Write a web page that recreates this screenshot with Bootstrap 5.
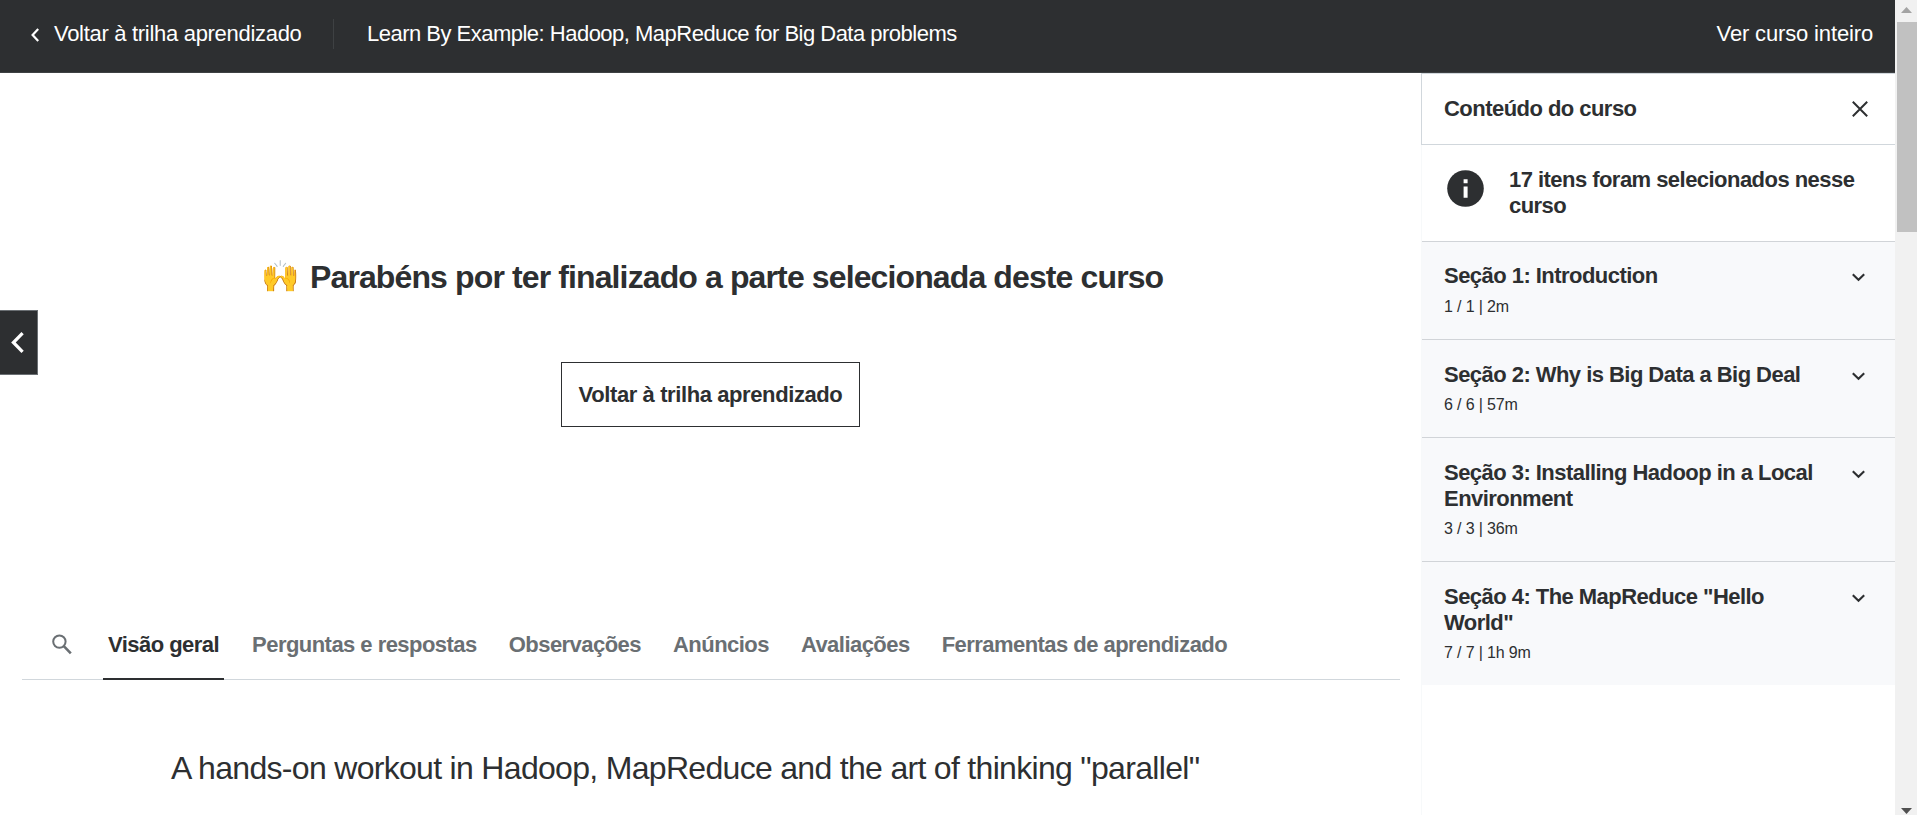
<!DOCTYPE html>
<html lang="pt-BR">
<head>
<meta charset="utf-8">
<meta name="viewport" content="width=device-width, initial-scale=1">
<title>Learn By Example: Hadoop, MapReduce for Big Data problems</title>
<link href="https://cdn.jsdelivr.net/npm/bootstrap@5.3.0/dist/css/bootstrap.min.css" rel="stylesheet">
<style>
  :root { --ink: #2d2f31; --muted: #6a6f73; --rule: #d1d7dc; }
  body { font-family: "Liberation Sans", Arial, sans-serif; font-size: 22px; line-height: 26px; color: var(--ink); }
  svg { display: block; flex: none; }
  a { color: inherit; text-decoration: none; }
  .app { height: 815px; }
  .topbar { height: 73px; background: var(--ink); border-bottom: 1px solid #3e4143; padding: 19px 22px 0 31px; }
  .topbar a, .topbar span { line-height: 30px; white-space: nowrap; }
  .topbar .sep { width: 1px; height: 30px; background: #3e4143; margin: 0 33px 0 31px; }
  .back-link { width: 271px; letter-spacing: -.3px; gap: 15px; }
  .back-link svg { margin-top: 1px; }
  .course-name { letter-spacing: -.51px; }
  .full-link { letter-spacing: -.15px; }
  .main-pane { padding: 0 21px 0 22px; }
  .stage { height: 538px; }
  .congrats { font-size: 32px; line-height: 40px; letter-spacing: -.88px; margin: 184px 0 0 240px; }
  .congrats .hands { font-size: 31px; width: 48px; letter-spacing: 0; text-indent: -1px; }
  .return-btn { width: 299px; height: 65px; margin: 65px 0 0 539px; border: 1px solid var(--ink); border-radius: 0; font-size: 22px; letter-spacing: -.4px; padding: 0; color: var(--ink); white-space: nowrap; }
  .prev-btn { left: 0; top: 310px; width: 38px; height: 65px; background: var(--ink); border: 1px solid var(--muted); border-left: 0; padding-left: 11px; }
  .tabs { height: 69px; border-bottom: 1px solid var(--rule); padding-left: 30px; letter-spacing: -.54px; color: var(--muted); }
  .tabs svg { margin: 23px 31px 0 0; }
  .tabs a { padding: 21px 5px 0; margin-right: 22px; height: 69px; border-bottom: 2px solid transparent; white-space: nowrap; }
  .tabs a.active { color: var(--ink); border-color: var(--ink); margin-right: 23px; }
  .headline { font-size: 32px; line-height: 40px; letter-spacing: -.69px; margin: 68px 0 0 149px; white-space: nowrap; font-weight: 400; }
  .sidebar { width: 474px; border-left: 1px solid #f7f9fa; letter-spacing: -.54px; }
  .side-head { height: 72px; border: 1px solid var(--rule); border-right: 0; margin-left: -1px; padding: 0 27px 0 22px; }
  .notice { height: 96px; padding: 22px 28px 0 25px; }
  .notice svg { margin-top: 3px; }
  .notice p { margin-left: 25px; }
  .section-item { background: #f8f9fb; border-top: 1px solid #d1d4d8; padding: 22px 30px 0 22px; height: 98px; }
  .section-item.first { padding-top: 21px; }
  .section-item.first h2 { margin-bottom: 7px; }
  .section-item.tall { height: 124px; }
  .section-item svg { margin-top: 10px; }
  .section-item h2 { font-size: 22px; line-height: 26px; margin: 0 0 6px; font-weight: 700; width: 385px; }
  .meta { font-size: 16px; line-height: 22px; letter-spacing: -.15px; }
  .scrollbar { width: 22px; background: #f1f1f1; padding: 7px 0 0 2px; }
  .scroll-up { margin-bottom: 9px; }
  .scroll-thumb { height: 210px; background: #c1c1c1; }
</style>
</head>
<body class="overflow-hidden">
<div class="app d-flex position-relative">
  <div class="flex-grow-1 d-flex flex-column">
    <header class="topbar d-flex align-items-start text-white">
      <a href="#" class="back-link d-flex align-items-center">
        <svg width="8" height="14" viewBox="0 0 8 14" fill="none" stroke="#fff" stroke-width="2.2"><path d="M7.2 1 1.6 7l5.6 6"/></svg>
        <span>Voltar à trilha aprendizado</span>
      </a>
      <div class="sep"></div>
      <span class="course-name">Learn By Example: Hadoop, MapReduce for Big Data problems</span>
      <a href="#" class="full-link ms-auto">Ver curso inteiro</a>
    </header>

    <div class="d-flex flex-grow-1 overflow-hidden">
      <main class="main-pane flex-grow-1">
        <section class="stage d-flex flex-column align-items-start">
          <h1 class="congrats fw-bold d-flex text-nowrap"><span class="hands">🙌</span>Parabéns por ter finalizado a parte selecionada deste curso</h1>
          <button class="btn return-btn fw-bold" type="button">Voltar à trilha aprendizado</button>
        </section>
        <nav class="tabs d-flex fw-bold">
          <svg width="20" height="21" viewBox="0 0 20 21" fill="none" stroke="#6a6f73"><circle cx="7.4" cy="7.6" r="6.2" stroke-width="2"/><path d="M11.8 12.2l7 7.2" stroke-width="2.6"/></svg>
          <a href="#" class="active">Visão geral</a>
          <a href="#">Perguntas e respostas</a>
          <a href="#">Observações</a>
          <a href="#">Anúncios</a>
          <a href="#">Avaliações</a>
          <a href="#">Ferramentas de aprendizado</a>
        </nav>
        <h2 class="headline">A hands-on workout in Hadoop, MapReduce and the art of thinking "parallel"</h2>
      </main>

      <aside class="sidebar flex-shrink-0 fw-bold">
        <div class="side-head d-flex align-items-center justify-content-between">
          <span>Conteúdo do curso</span>
          <svg width="16" height="16" viewBox="0 0 16 16" stroke="#2d2f31" stroke-width="2"><path d="M.8.8l14.4 14.4M15.2.8.8 15.2"/></svg>
        </div>
        <div class="notice d-flex">
          <svg width="37" height="37" viewBox="0 0 37 37"><circle cx="18.5" cy="18.5" r="18.3" fill="#2d2f31"/><path d="M16.6 9.3h4v4h-4zM16.6 16.5h4v11.3h-4z" fill="#fff"/></svg>
          <p class="mb-0">17 itens foram selecionados nesse<br>curso</p>
        </div>
        <div class="section-item first d-flex justify-content-between">
          <div><h2>Seção 1: Introduction</h2><div class="meta fw-normal">1 / 1 | 2m</div></div>
          <svg width="13" height="9" viewBox="0 0 13 9" fill="none" stroke="#2d2f31" stroke-width="2.1"><path d="M.8 1.2l5.7 5.6 5.7-5.6"/></svg>
        </div>
        <div class="section-item d-flex justify-content-between">
          <div><h2>Seção 2: Why is Big Data a Big Deal</h2><div class="meta fw-normal">6 / 6 | 57m</div></div>
          <svg width="13" height="9" viewBox="0 0 13 9" fill="none" stroke="#2d2f31" stroke-width="2.1"><path d="M.8 1.2l5.7 5.6 5.7-5.6"/></svg>
        </div>
        <div class="section-item tall d-flex justify-content-between">
          <div><h2>Seção 3: Installing Hadoop in a Local Environment</h2><div class="meta fw-normal">3 / 3 | 36m</div></div>
          <svg width="13" height="9" viewBox="0 0 13 9" fill="none" stroke="#2d2f31" stroke-width="2.1"><path d="M.8 1.2l5.7 5.6 5.7-5.6"/></svg>
        </div>
        <div class="section-item tall d-flex justify-content-between">
          <div><h2>Seção 4: The MapReduce "Hello World"</h2><div class="meta fw-normal">7 / 7 | 1h 9m</div></div>
          <svg width="13" height="9" viewBox="0 0 13 9" fill="none" stroke="#2d2f31" stroke-width="2.1"><path d="M.8 1.2l5.7 5.6 5.7-5.6"/></svg>
        </div>
      </aside>
    </div>
  </div>

  <div class="scrollbar d-flex flex-column flex-shrink-0">
    <svg class="scroll-up ms-1" width="11" height="6" viewBox="0 0 11 6"><path d="M5.5 0 11 6H0z" fill="#a3a3a3"/></svg>
    <div class="scroll-thumb"></div>
    <svg class="ms-1 mt-auto" width="11" height="7" viewBox="0 0 11 7"><path d="M0 0h11L5.5 6z" fill="#505050"/></svg>
  </div>

  <a href="#" class="prev-btn position-absolute d-flex align-items-center" aria-label="Anterior">
    <svg width="13" height="21" viewBox="0 0 13 21" fill="none" stroke="#fff" stroke-width="3.2"><path d="M11.6 1.2 2.4 10.5l9.2 9.3"/></svg>
  </a>
</div>
<script src="https://cdn.jsdelivr.net/npm/bootstrap@5.3.0/dist/js/bootstrap.bundle.min.js"></script>
</body>
</html>
